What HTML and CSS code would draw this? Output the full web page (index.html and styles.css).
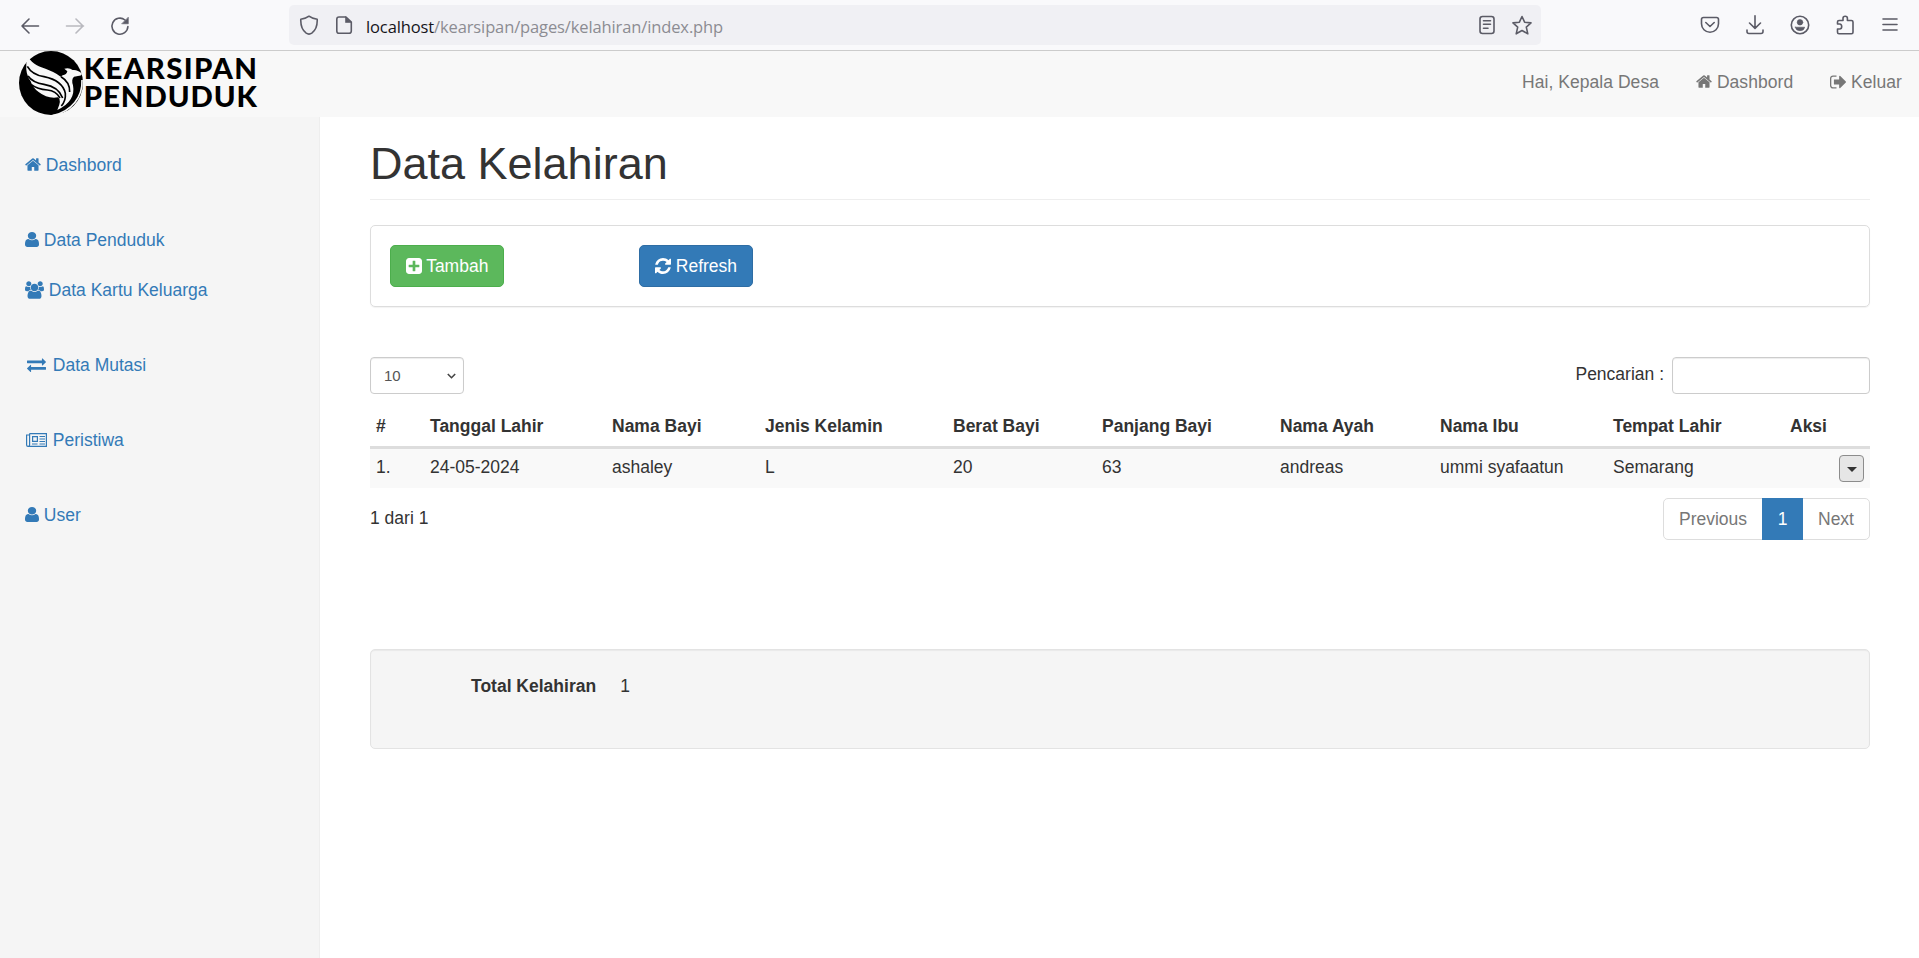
FILE: index.html
```html
<!DOCTYPE html>
<html lang="id">
<head>
<meta charset="utf-8">
<title>Data Kelahiran</title>
<link rel="stylesheet" href="styles.css">
</head>
<body>
<svg class="defs" width="0" height="0" aria-hidden="true">
  <symbol id="home" viewBox="64 128 1664 1536"><path d="M1472 992v480q0 26-19 45t-45 19h-384v-384h-256v384h-384q-26 0-45-19t-19-45v-480q0-1 .5-3t.5-3l575-474 575 474q1 2 1 6zm223-69l-62 74q-8 9-21 11h-3q-13 0-21-7l-692-577-692 577q-12 8-24 7-13-2-21-11l-62-74q-8-10-7-23.5t11-21.5l719-599q32-26 76-26t76 26l244 204v-195q0-14 9-23t23-9h192q14 0 23 9t9 23v408l219 182q10 8 11 21.5t-7 23.5z"/></symbol>
  <symbol id="user" viewBox="256 128 1280 1536" preserveAspectRatio="none"><path d="M1536 1399q0 109-62.5 187t-150.5 78h-854q-88 0-150.5-78t-62.5-187q0-85 8.5-160.5t31.5-152 58.5-131 94-89 134.5-34.5q131 128 313 128t313-128q76 0 134.5 34.5t94 89 58.5 131 31.5 152 8.5 160.5zm-256-887q0 159-112.5 271.5t-271.5 112.5-271.5-112.5-112.5-271.5 112.5-271.5 271.5-112.5 271.5 112.5 112.5 271.5z"/></symbol>
</svg>

<header class="browser">
  <div class="nav-buttons">
    <svg width="20" height="20" viewBox="0 0 20 20" class="line"><path d="M18.500 10H2M9 3L2 10l7 7"/></svg>
    <svg width="20" height="20" viewBox="0 0 20 20" class="line faded"><path d="M1.500 10h17M11 3l7 7-7 7"/></svg>
    <svg width="20" height="20" viewBox="0 0 20 20" class="line"><path d="M17.900 10.500A8 8 0 1 1 15 4"/><path d="M18.300 1.500v6.300H12z" class="solid"/></svg>
  </div>
  <div class="urlbar">
    <svg width="20" height="20" viewBox="0 0 20 20" class="line"><path d="M10 1.200C8 2.800 4.800 3.800 1.800 4.200C1.500 10.500 3.500 15.500 7.200 18.200Q10 20 12.800 18.200C16.500 15.500 18.500 10.500 18.200 4.200C15.200 3.800 12 2.800 10 1.200z"/></svg>
    <svg width="18" height="20" viewBox="0 0 18 20" class="line doc"><path d="M4 2h7l5.300 5v9q0 2.300-2.300 2.300H4Q1.800 18.300 1.800 16V4.200Q1.800 2 4 2z"/><path d="M10.500 2v5.500h5.800z" class="solid"/></svg>
    <span class="url"><b>localhost</b>/kearsipan/pages/kelahiran/index.php</span>
    <svg width="18" height="20" viewBox="0 0 18 20" class="line reader"><rect x="2" y="1.500" width="14" height="17" rx="2.500"/><path d="M5.500 5.800h7M5.500 9.300h7M5.500 13.200h4.500"/></svg>
    <svg width="22" height="21" viewBox="0 0 22 21" class="line"><path d="M11 1.500l2.600 5.700 6.400.7-4.700 4.200 1.500 6.700L11 15.500l-5.800 3.300 1.500-6.700L2 7.900l6.400-.7z"/></svg>
  </div>
  <div class="tools">
    <svg width="20" height="20" viewBox="0 0 20 20" class="line"><path d="M3.500 2.500h13q2 0 2 2v4.300a8.500 8.500 0 0 1-17 0V4.500q0-2 2-2z"/><path d="M5.800 7.500L10 11.500l4.200-4"/></svg>
    <svg width="20" height="20" viewBox="0 0 20 20" class="line"><path d="M10 .8v12M4.500 8l5.500 5.300L15.500 8M2 15v1.500q0 2 2 2h12q2 0 2-2V15"/></svg>
    <svg width="20" height="20" viewBox="0 0 20 20" class="line"><circle cx="10" cy="10" r="8.700"/><circle cx="10" cy="7.300" r="2.800" class="solid"/><path d="M5.300 12.200h9.400q-.7 3.500-4.700 3.500t-4.700-3.500z" class="solid"/></svg>
    <svg width="20" height="20" viewBox="0 0 20 20" class="line"><path d="M2.500 9V7q0-1.500 1.500-1.500h4V3.300q0-2 2.200-2t2.200 2v2.200h4q1.600 0 1.600 1.500v10.300q0 1.500-1.500 1.500H4q-1.500 0-1.500-1.500V14h2.200q2 0 2-2.400T4.700 9z"/></svg>
    <svg width="20" height="20" viewBox="0 0 20 20" class="line"><path d="M3 4h14M3 9.500h14M3 15h14"/></svg>
  </div>
</header>

<nav class="navbar">
  <svg class="logo" width="260" height="66" viewBox="0 153 780 198">
    <circle cx="153" cy="249" r="96"/>
    <path class="w" d="M80 153C84 182 104 194 124 202Q160 214 182 230L188 226Q200 224 202 214L193 206Q208 202 218 210Q232 208 246 221Q244 228 238 227L222 230Q213 238 219 256Q228 304 172 330Q186 300 174 292Q142 297 116 276Q98 264 92 244Q76 224 79 190Q85 176 80 153z"/>
    <path class="k" d="M82 199Q96 224 132 230Q188 242 196 280Q198 302 184 318"/>
    <path class="k" d="M84 228Q98 248 132 253Q176 260 188 294"/>
    <path class="k" d="M94 254Q112 268 142 270Q168 272 180 294"/>
    <path class="k" d="M183 230Q210 246 209 276"/>
    <path class="r" d="M246 240C249 290 215 334 158 347"/>
    <text x="251" y="237" textLength="520" lengthAdjust="spacing">KEARSIPAN</text>
    <text x="251" y="320" textLength="520" lengthAdjust="spacing">PENDUDUK</text>
  </svg>
  <div class="nav-right">
    <a>Hai, Kepala Desa</a>
    <a><svg class="fa" width="16" height="15"><use href="#home"/></svg> Dashbord</a>
    <a><svg class="fa" width="16" height="14" viewBox="64 256 1568 1280"><path d="M704 1440q0 4 1 20t.5 26.500-3 23.500-10 19.500-20.500 6.500h-320q-119 0-203.500-84.500t-84.500-203.500v-704q0-119 84.500-203.500t203.500-84.500h320q13 0 22.500 9.500t9.500 22.500q0 4 1 20t.5 26.500-3 23.500-10 19.500-20.500 6.500h-320q-66 0-113 47t-47 113v704q0 66 47 113t113 47h312l11.500 1 11.500 3 8 5.500 7 9 2 13.500zm928-544q0 26-19 45l-544 544q-19 19-45 19t-45-19-19-45v-288h-448q-26 0-45-19t-19-45v-384q0-26 19-45t45-19h448v-288q0-26 19-45t45-19 45 19l544 544q19 19 19 45z"/></svg> Keluar</a>
  </div>
</nav>

<div class="body">
  <aside class="sidebar">
    <a><svg class="fa" width="16" height="15"><use href="#home"/></svg> Dashbord</a>
    <a class="group"><svg class="fa" width="14" height="15"><use href="#user"/></svg> Data Penduduk</a>
    <a><svg class="fa people" width="19" height="18" viewBox="0 0 1920 1792"><path d="M593 896q-162 5-265 128h-134q-82 0-138-40.500t-56-118.500q0-353 124-353 6 0 43.500 21t97.500 42.500 119 21.500q67 0 133-23-5 37-5 66 0 139 81 256zm1071 637q0 120-73 189.500t-194 69.500h-874q-121 0-194-69.500t-73-189.500q0-53 3.500-103.500t14-109 26.500-108.500 43-97.500 62-81 85.500-53.500 111.500-20q10 0 43 21.500t73 48 107 48 135 21.500 135-21.500 107-48 73-48 43-21.500q61 0 111.500 20t85.500 53.500 62 81 43 97.500 26.500 108.500 14 109 3.500 103.500zm-1024-1277q0 106-75 181t-181 75-181-75-75-181 75-181 181-75 181 75 75 181zm704 384q0 159-112.500 271.500t-271.500 112.500-271.500-112.500-112.500-271.500 112.500-271.500 271.500-112.500 271.500 112.500 112.500 271.500zm576 225q0 78-56 118.500t-138 40.500h-134q-103-123-265-128 81-117 81-256 0-29-5-66 66 23 133 23 59 0 119-21.500t97.500-42.500 43.500-21q124 0 124 353zm-128-609q0 106-75 181t-181 75-181-75-75-181 75-181 181-75 181 75 75 181z"/></svg> Data Kartu Keluarga</a>
    <a class="group"><svg class="fa wide" width="19" height="14" viewBox="0 256 1792 1376" preserveAspectRatio="none"><path d="M1792 1184v192q0 13-9.500 22.500t-22.500 9.500h-1376v192q0 13-9.500 22.500t-22.500 9.500q-12 0-24-10l-319-320q-9-9-9-22 0-14 9-23l320-320q9-9 23-9 13 0 22.500 9.500t9.500 22.500v192h1376q13 0 22.500 9.500t9.500 22.500zm0-544q0 14-9 23l-320 320q-9 9-23 9-13 0-22.500-9.500t-9.500-22.500v-192h-1376q-13 0-22.500-9.500t-9.500-22.500v-192q0-13 9.500-22.500t22.500-9.500h1376v-192q0-14 9-23t23-9q12 0 24 10l319 319q9 9 9 23z"/></svg> Data Mutasi</a>
    <a class="group"><svg class="fa paper" width="21" height="14" viewBox="0 0 21 14"><path d="M3.600.6h16.800v12.800H2Q.6 13.400.6 12V2h3M3.600.6v11.400q0 1.400-1.400 1.400M6.600 3.600h4.800v4.800H6.600zM13.500 3.500H19M13.500 6H19M13.500 8.500H19M6 11h5.500M13.500 11H19"/></svg> Peristiwa</a>
    <a class="group"><svg class="fa" width="14" height="15"><use href="#user"/></svg> User</a>
  </aside>

  <main>
    <h1>Data Kelahiran</h1>
    <section class="panel">
      <a class="btn green"><svg class="fa" width="16" height="16" viewBox="128 128 1536 1536"><path d="M1408 960v-128q0-26-19-45t-45-19h-320v-320q0-26-19-45t-45-19h-128q-26 0-45 19t-19 45v320h-320q-26 0-45 19t-19 45v128q0 26 19 45t45 19h320v320q0 26 19 45t45 19h128q26 0 45-19t19-45v-320h320q26 0 45-19t19-45zm256-544v960q0 119-84.500 203.500t-203.500 84.500h-960q-119 0-203.500-84.500t-84.500-203.500v-960q0-119 84.500-203.500t203.500-84.500h960q119 0 203.500 84.500t84.500 203.500z"/></svg> Tambah</a>
      <a class="btn blue"><svg class="fa" width="16" height="16" viewBox="128 128 1536 1536"><path d="M1639 1056q0 5-1 7-64 268-268 434.500t-478 166.500q-146 0-282.500-55t-243.500-157l-129 129q-19 19-45 19t-45-19-19-45v-448q0-26 19-45t45-19h448q26 0 45 19t19 45-19 45l-137 137q71 66 161 102t187 36q134 0 250-65t186-179q11-17 53-117 8-23 30-23h192q13 0 22.500 9.500t9.500 22.500zm25-800v448q0 26-19 45t-45 19h-448q-26 0-45-19t-19-45 19-45l138-138q-148-137-349-137-134 0-250 65t-186 179q-11 17-53 117-8 23-30 23h-199q-13 0-22.500-9.500t-9.500-22.500v-7q65-268 270-434.500t480-166.500q146 0 284 55.500t245 156.500l130-129q19-19 45-19t45 19 19 45z"/></svg> Refresh</a>
    </section>

    <div class="filters">
      <div class="select">10<svg width="9" height="6" viewBox="0 0 9 6"><path d="M.8 1l3.700 3.700L8.200 1"/></svg></div>
      <label>Pencarian :<input type="text"></label>
    </div>

    <table>
      <colgroup><col class="c1"><col class="c2"><col class="c3"><col class="c4"><col class="c5"><col class="c6"><col class="c7"><col class="c8"><col class="c9"><col class="c10"></colgroup>
      <thead><tr><th>#</th><th>Tanggal Lahir</th><th>Nama Bayi</th><th>Jenis Kelamin</th><th>Berat Bayi</th><th>Panjang Bayi</th><th>Nama Ayah</th><th>Nama Ibu</th><th>Tempat Lahir</th><th>Aksi</th></tr></thead>
      <tbody><tr><td>1.</td><td>24-05-2024</td><td>ashaley</td><td>L</td><td>20</td><td>63</td><td>andreas</td><td>ummi syafaatun</td><td>Semarang</td><td class="act"><span class="drop"><i></i></span></td></tr></tbody>
    </table>

    <div class="foot">
      <span class="info">1 dari 1</span>
      <div class="pages"><a class="prev">Previous</a><a class="on">1</a><a class="next">Next</a></div>
    </div>

    <section class="well"><b>Total Kelahiran</b><span>1</span></section>
  </main>
</div>
</body>
</html>
```
FILE: styles.css
```css
* { box-sizing: border-box; }
body {
  margin: 0;
  height: 958px;
  overflow: hidden;
  display: flex;
  flex-direction: column;
  font: 17.5px/25px "Liberation Sans", Arial, sans-serif;
  color: #333;
  background: #fff;
}
.defs { position: absolute; }

/* Browser toolbar */
.browser {
  flex: none;
  height: 51px;
  padding-top: 5px;
  display: flex;
  align-items: flex-start;
  background: #f9f9fb;
  border-bottom: 1px solid #ccc;
}
.line { fill: none; stroke: #5b5b66; stroke-width: 1.6; stroke-linecap: round; stroke-linejoin: round; flex: none; }
.line .solid { fill: #5b5b66; stroke-width: .6; }
.faded { opacity: .4; }
.nav-buttons { width: 289px; height: 41px; padding-left: 20px; display: flex; align-items: center; gap: 25px; }
.urlbar {
  width: 1252px;
  height: 40px;
  padding: 0 8px 0 10px;
  display: flex;
  align-items: center;
  background: #f0f0f4;
  border-radius: 5px;
}
.doc { margin-left: 16px; }
.url { margin-left: 13px; flex: 1; font: 16.5px/24px "Open Sans", "Noto Sans", sans-serif; color: #8c8c92; padding-top: 3px; letter-spacing: -.12px; }
.url b { font-weight: 400; color: #15141a; }
.reader { margin-right: 15px; }
.tools { height: 40px; margin-left: 159px; display: flex; align-items: center; gap: 25px; }

/* Site header */
.navbar {
  flex: none;
  height: 66px;
  display: flex;
  justify-content: space-between;
  background: #f8f8f8;
}
.logo text { font: 900 88px Lato, sans-serif; }
.logo .w { fill: #f8f8f8; }
.logo .k { fill: none; stroke: #000; stroke-width: 5; }
.logo .r { fill: none; stroke: #f8f8f8; stroke-width: 5; }
.nav-right { display: flex; gap: 37px; padding: 19px 17px 0 0; color: #777; letter-spacing: .05px; }
.fa { fill: currentColor; vertical-align: -1px; }

.body { flex: 1; display: flex; }
.sidebar {
  width: 320px;
  padding-top: 23px;
  background: #f5f5f5;
  border-right: 1px solid #eee;
  color: #337ab7;
}
.sidebar a { display: block; height: 50px; padding: 13px 25px 12px; }
.sidebar .group { margin-top: 25px; }
.sidebar .people { vertical-align: -3px; }
.wide { margin: 0 2px; }
.sidebar .paper { margin: 0 1px; fill: none; stroke: currentColor; stroke-width: 1.2; }

main { flex: 1; padding: 0 49px 0 50px; }
h1 {
  margin: 22px 0 25px;
  height: 61px;
  font-size: 45px;
  line-height: 50px;
  font-weight: 400;
  border-bottom: 1px solid #eee;
}
.panel {
  height: 82px;
  padding: 19px;
  display: flex;
  gap: 135px;
  border: 1px solid #ddd;
  border-radius: 5px;
  box-shadow: 0 1px 1px rgba(0,0,0,.05);
}
.btn { width: 114px; height: 42px; padding-top: 8px; text-align: center; color: #fff; border: 1px solid; border-radius: 5px; white-space: nowrap; }
.green { background: #5cb85c; border-color: #4cae4c; }
.blue { background: #337ab7; border-color: #2e6da4; }
.btn .fa { vertical-align: -2px; }

.filters { margin-top: 50px; display: flex; justify-content: space-between; }
.select, input {
  height: 37px;
  border: 1px solid #ccc;
  border-radius: 4px;
  background: #fff;
  box-shadow: inset 0 1px 1px rgba(0,0,0,.075);
}
.select { width: 94px; padding: 0 7px 0 13px; display: flex; align-items: center; justify-content: space-between; font-size: 15px; color: #555; }
.select svg { fill: none; stroke: #444; stroke-width: 1.6; }
label { display: flex; line-height: 34px; }
input { width: 198px; margin-left: 8px; }

table { width: 1500px; table-layout: fixed; border-collapse: separate; border-spacing: 0; margin-top: 7px; }
th, td { padding: 0 6px 0 7px; text-align: left; white-space: nowrap; }
th:first-child, td:first-child { padding-left: 6px; }
th { height: 48px; padding-top: 6px; border-bottom: 3px solid #ddd; }
td { height: 39px; padding-bottom: 2px; background: #f9f9f9; }
.c1 { width: 53px; } .c2 { width: 182px; } .c3 { width: 153px; } .c4 { width: 188px; } .c5 { width: 149px; }
.c6 { width: 178px; } .c7 { width: 160px; } .c8 { width: 173px; } .c9 { width: 177px; } .c10 { width: 87px; }
td.act { padding: 0 6px 0 0; }
.drop { display: flex; align-items: center; justify-content: center; width: 25px; height: 27px; margin-left: auto; background: #e6e6e6; border: 1px solid #8c8c8c; border-radius: 4px; }
.drop i { border: 5px solid transparent; border-top-color: #333; border-bottom: 0; margin-top: 2px; }

.foot { margin-top: 10px; display: flex; justify-content: space-between; }
.info { padding-top: 8px; }
.pages { display: flex; height: 42px; border: 1px solid #ddd; border-radius: 5px; color: #777; }
.pages a { padding-top: 8px; text-align: center; }
.prev { width: 98px; }
.next { width: 66px; }
.on { width: 41px; margin: -1px 0; border: 1px solid #337ab7; background: #337ab7; color: #fff; }

.well {
  margin-top: 109px;
  height: 100px;
  padding: 24px 0 0 100px;
  display: flex;
  gap: 24px;
  background: #f5f5f5;
  border: 1px solid #e3e3e3;
  border-radius: 5px;
  box-shadow: inset 0 1px 1px rgba(0,0,0,.05);
}
```
